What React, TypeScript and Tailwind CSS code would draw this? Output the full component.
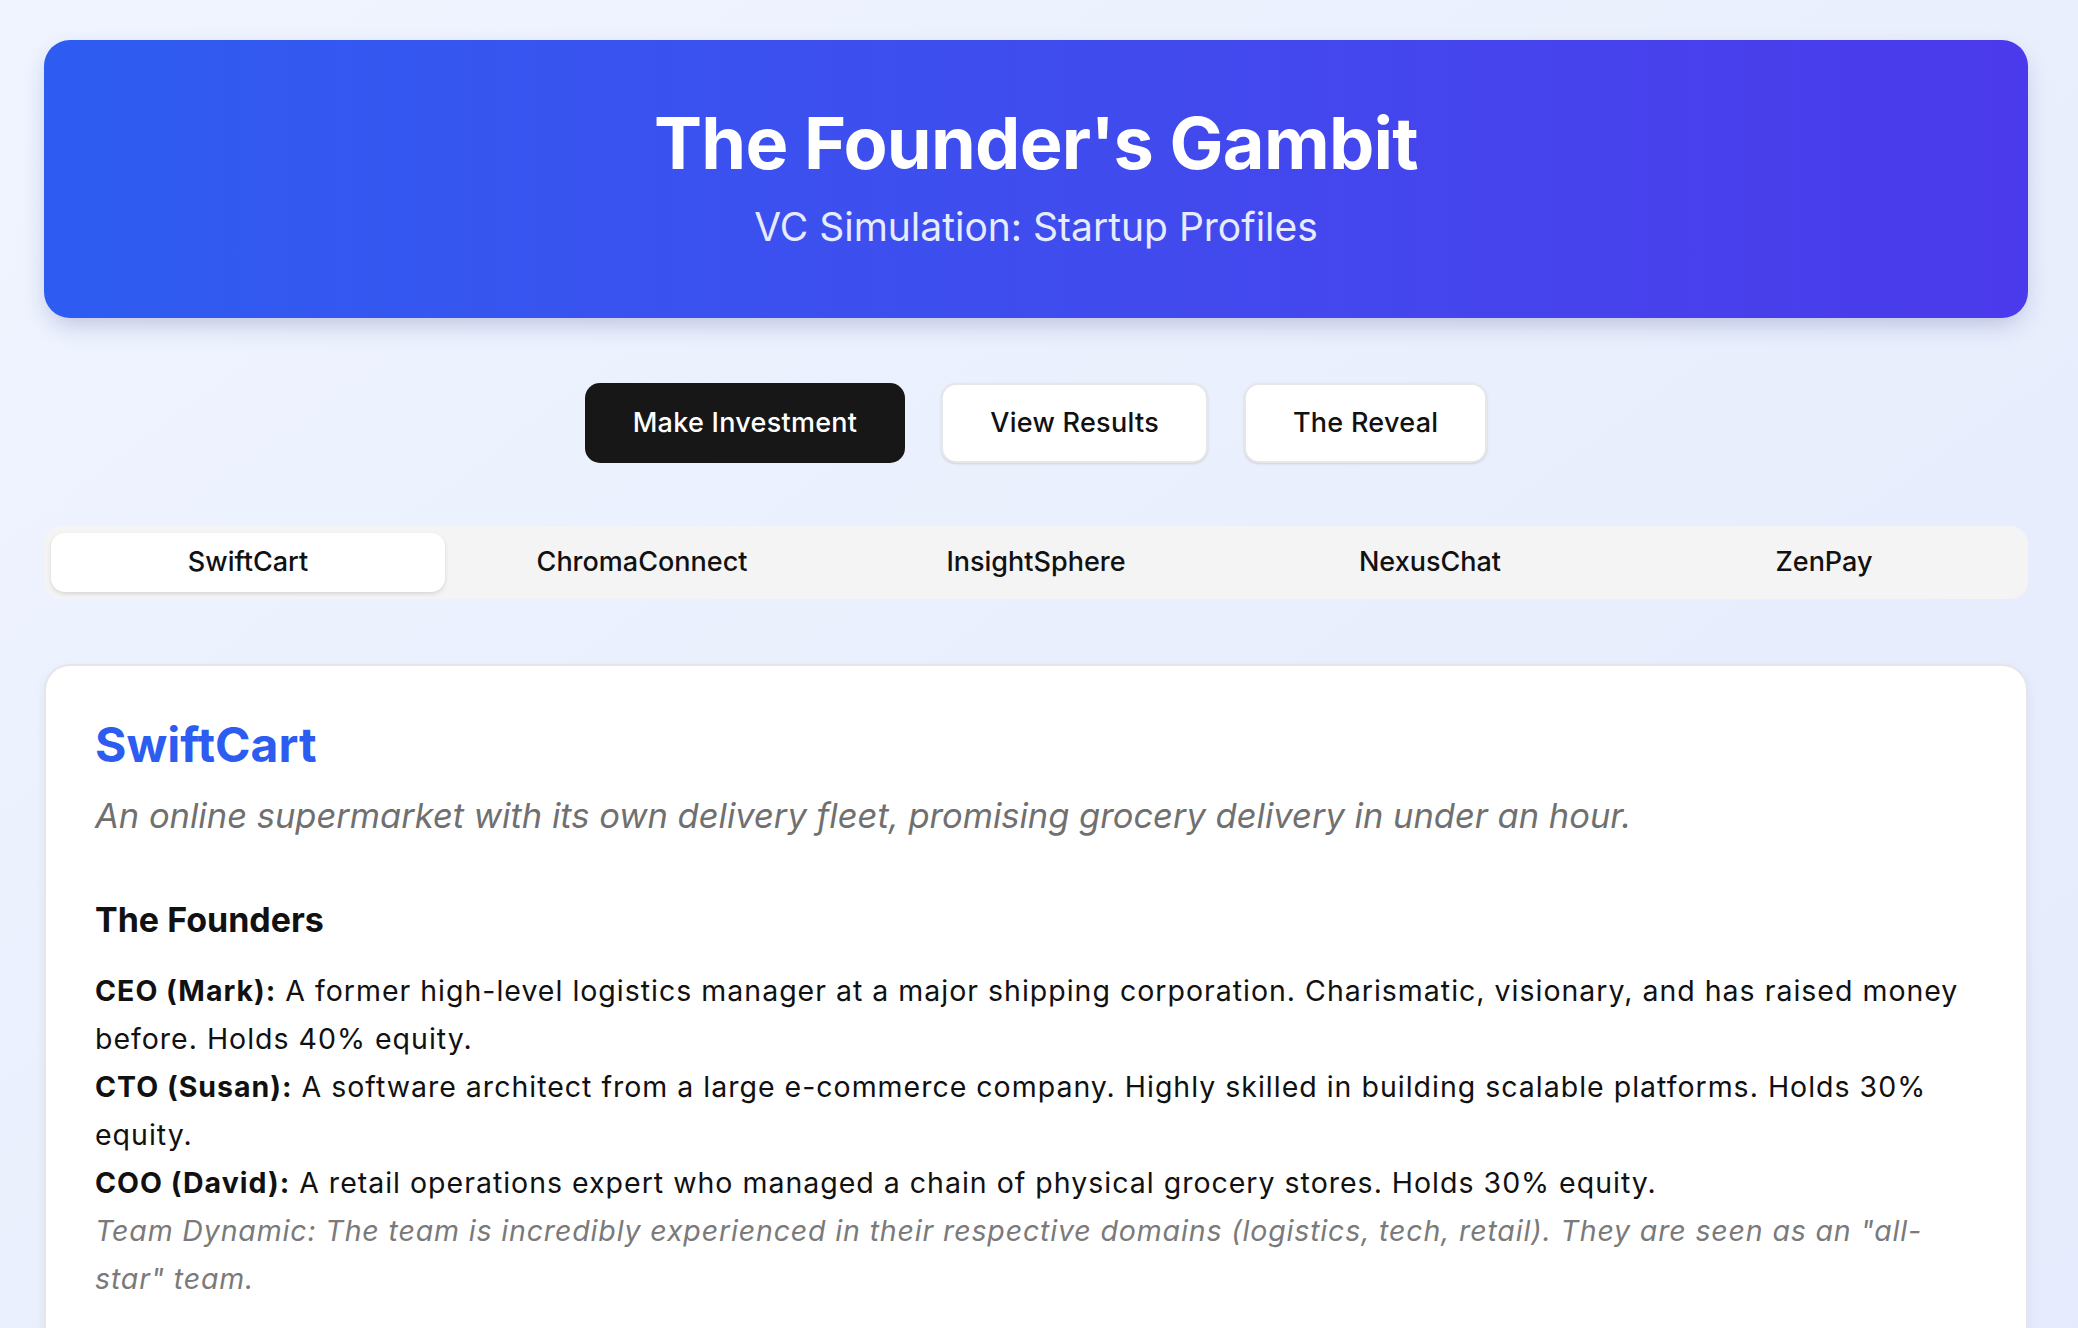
import { useState } from "react";

const STARTUPS = ["SwiftCart", "ChromaConnect", "InsightSphere", "NexusChat", "ZenPay"];

const ACTIONS = [
  { label: "Make Investment", primary: true },
  { label: "View Results", primary: false },
  { label: "The Reveal", primary: false },
];

export default function App() {
  const [tab, setTab] = useState("SwiftCart");

  return (
    <div className="min-h-screen bg-gradient-to-br from-[#eff4ff] to-[#e5eafc] pl-[44px] pr-[50px] pt-[40px] pb-16 font-['Inter',sans-serif] text-[#111111]">
      <header className="rounded-[26px] bg-gradient-to-r from-[#2d5cf1] to-[#4b3aeb] py-[63px] text-center text-white shadow-[0_10px_25px_-5px_rgba(30,40,120,0.25)]">
        <h1 className="text-[72px] font-bold leading-[80px] tracking-[-0.01em]">The Founder's Gambit</h1>
        <p className="mt-[16px] text-[39px] leading-[56px] text-[#e6ebff]">VC Simulation: Startup Profiles</p>
      </header>

      <div className="mt-[65px] flex justify-center gap-[36px]">
        {ACTIONS.map((a) => (
          <button
            key={a.label}
            type="button"
            className={
              a.primary
                ? "h-[80px] rounded-[15px] bg-[#171717] px-[48px] text-[27px] font-medium tracking-[0.01em] text-white"
                : "h-[80px] rounded-[15px] border-2 border-[#e7e7ea] bg-white px-[47px] text-[27px] font-medium tracking-[0.01em] text-[#111111] shadow-sm"
            }
          >
            {a.label}
          </button>
        ))}
      </div>

      <div className="mt-[63px] grid grid-cols-5 rounded-[18px] bg-[#f4f4f4] p-[7px]">
        {STARTUPS.map((s) => (
          <button
            key={s}
            type="button"
            onClick={() => setTab(s)}
            className={
              tab === s
                ? "h-[59px] rounded-[14px] bg-white text-[27px] font-medium text-[#111111] shadow-[0_2px_4px_rgba(0,0,0,0.12)]"
                : "h-[59px] rounded-[14px] text-[27px] font-medium text-[#111111]"
            }
          >
            {s}
          </button>
        ))}
      </div>

      <section className="mt-[65px] min-h-[800px] rounded-[26px] border-2 border-[#e6e6e8] bg-white px-[49px] pt-[50px] pb-[50px] shadow-[0_4px_12px_rgba(30,40,120,0.06)]">
        <h2 className="text-[48px] font-bold leading-[58px] text-[#2c5cf0]">SwiftCart</h2>
        <p className="mt-[18px] text-[34.5px] italic leading-[48px] text-[#707070]">
          An online supermarket with its own delivery fleet, promising grocery delivery in under an hour.
        </p>

        <h3 className="mt-[60px] text-[34px] font-bold leading-[40px]">The Founders</h3>
        <div className="mt-[27px] text-[28.5px] leading-[48px] tracking-[0.035em]">
          <p>
            <span className="font-bold">CEO (Mark):</span> A former high-level logistics manager at a major shipping
            corporation. Charismatic, visionary, and has raised money before. Holds 40% equity.
          </p>
          <p>
            <span className="font-bold">CTO (Susan):</span> A software architect from a large e-commerce company.
            Highly skilled in building scalable platforms. Holds 30% equity.
          </p>
          <p>
            <span className="font-bold">COO (David):</span> A retail operations expert who managed a chain of physical
            grocery stores. Holds 30% equity.
          </p>
          <p className="italic tracking-[0.03em] text-[#7a7a7a]">
            Team Dynamic: The team is incredibly experienced in their respective domains (logistics, tech, retail).
            They are seen as an "all-star" team.
          </p>
        </div>
      </section>
    </div>
  );
}
